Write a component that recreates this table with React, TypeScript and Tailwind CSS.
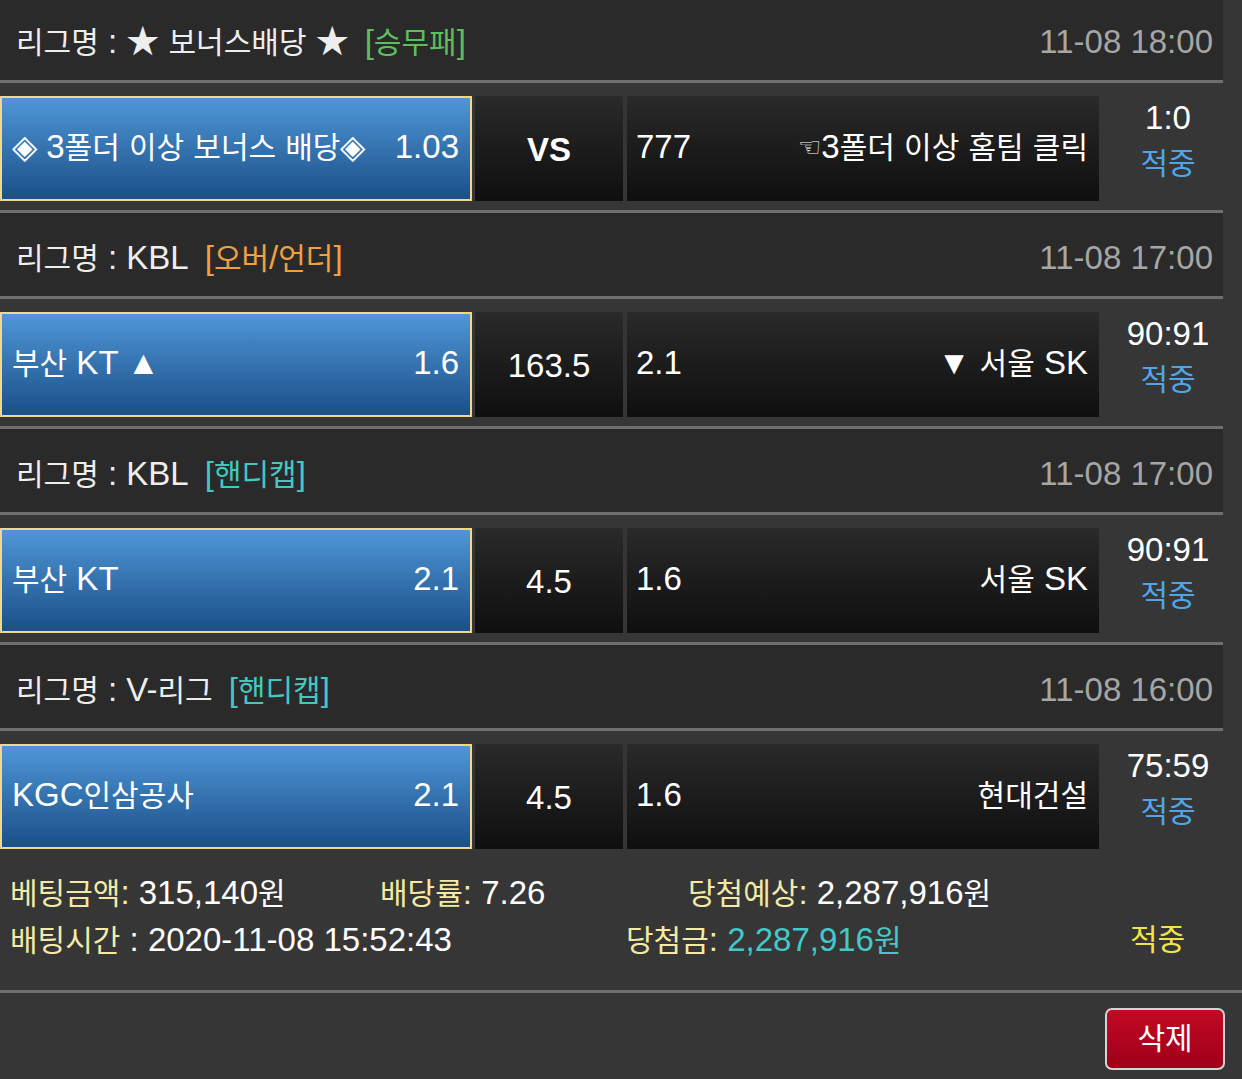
import type { ReactNode } from 'react'

const font = { fontFamily: '"Liberation Sans", "Noto Sans CJK KR", sans-serif' }

// hangul runs render a bit smaller than the latin text in the source page
function K({ t }: { t: string }) {
  const parts = t.split(/([\uAC00-\uD7A3\u3131-\u318E]+)/)
  return (
    <>
      {parts.map((p, i) =>
        i % 2 === 1 ? <span key={i} className="text-[30px]">{p}</span> : <span key={i}>{p}</span>
      )}
    </>
  )
}

type Game = {
  league: string
  tag: string
  tagColor: string
  time: string
  home: string
  homeOdd: string
  mid: string
  midBold?: boolean
  awayOdd: string
  away: ReactNode
  score: string
}

const games: Game[] = [
  {
    league: '리그명 : ★ 보너스배당 ★',
    tag: '[승무패]',
    tagColor: 'text-[#5cbf5c]',
    time: '11-08 18:00',
    home: '◈ 3폴더 이상 보너스 배당◈',
    homeOdd: '1.03',
    mid: 'VS',
    midBold: true,
    awayOdd: '777',
    away: (
      <>
        <span className="text-[26px] align-[2px]" style={{ fontFamily: '"DejaVu Sans", sans-serif' }}>☜</span>
        <K t="3폴더 이상 홈팀 클릭" />
      </>
    ),
    score: '1:0',
  },
  {
    league: '리그명 : KBL',
    tag: '[오버/언더]',
    tagColor: 'text-[#f0a040]',
    time: '11-08 17:00',
    home: '부산 KT ▲',
    homeOdd: '1.6',
    mid: '163.5',
    awayOdd: '2.1',
    away: <K t="▼ 서울 SK" />,
    score: '90:91',
  },
  {
    league: '리그명 : KBL',
    tag: '[핸디캡]',
    tagColor: 'text-[#44c8c0]',
    time: '11-08 17:00',
    home: '부산 KT',
    homeOdd: '2.1',
    mid: '4.5',
    awayOdd: '1.6',
    away: <K t="서울 SK" />,
    score: '90:91',
  },
  {
    league: '리그명 : V-리그',
    tag: '[핸디캡]',
    tagColor: 'text-[#44c8c0]',
    time: '11-08 16:00',
    home: 'KGC인삼공사',
    homeOdd: '2.1',
    mid: '4.5',
    awayOdd: '1.6',
    away: <K t="현대건설" />,
    score: '75:59',
  },
]

function GameBlock({ g, first }: { g: Game; first: boolean }) {
  return (
    <div className="w-[1223px]">
      {!first && <div className="h-[3px] bg-[#6f6f6f]" />}
      <div className={`${first ? 'h-[80px] pt-[3px]' : 'h-[83px] pt-[6px]'} bg-[#2a2a2a] flex items-center pl-[16px] pr-[10px] text-[33px] leading-none`}>
        <span className="text-[#eeeeee]"><K t={g.league} /></span>
        <span className={`ml-[16px] ${g.tagColor}`}><K t={g.tag} /></span>
        <span className="ml-auto text-[#a6a6a6]">{g.time}</span>
      </div>
      <div className="h-[3px] bg-[#6f6f6f]" />
      <div className="h-[127px] pt-[13px] pb-[9px] flex text-[33px] leading-none text-white">
        <div className="w-[472px] h-[105px] border-2 border-[#f2d88c] bg-gradient-to-b from-[#4f97d8] to-[#1b5088] flex items-center pl-[10px] pr-[11px] pb-[5px]">
          <span><K t={g.home} /></span>
          <span className="ml-auto">{g.homeOdd}</span>
        </div>
        <div className="ml-[3px] w-[148px] h-[105px] bg-gradient-to-b from-[#2a2a2a] to-[#0f0f0f] flex items-center justify-center pt-[2px]">
          <span className={g.midBold ? 'font-bold' : ''}>{g.mid}</span>
        </div>
        <div className="ml-[4px] w-[472px] h-[105px] bg-gradient-to-b from-[#2a2a2a] to-[#0f0f0f] flex items-center pl-[9px] pr-[11px] pb-[5px]">
          <span>{g.awayOdd}</span>
          <span className="ml-auto">{g.away}</span>
        </div>
        <div className="flex-1 flex flex-col items-center justify-center pl-[14px] pb-[16px] leading-[46px]">
          <span>{g.score}</span>
          <span className="text-[#4ea6e6] text-[30px]">적중</span>
        </div>
      </div>
    </div>
  )
}

export default function App() {
  return (
    <div className="min-h-screen bg-[#363636] overflow-hidden" style={font}>
      {games.map((g, i) => (
        <GameBlock key={i} g={g} first={i === 0} />
      ))}
      <div className="h-[132px] pt-[12px] text-[33px] leading-[46px] text-white">
        <div className="flex pl-[10px]">
          <span className="w-[370px]"><span className="text-[#f3eaa8]"><K t="베팅금액:" /></span> <K t="315,140원" /></span>
          <span className="w-[308px]"><span className="text-[#f3eaa8]"><K t="배당률:" /></span> 7.26</span>
          <span><span className="text-[#f3eaa8]"><K t="당첨예상:" /></span> <K t="2,287,916원" /></span>
        </div>
        <div className="flex pl-[10px]">
          <span className="w-[616px]"><span className="text-[#f3eaa8]"><K t="배팅시간" /></span> : 2020-11-08 15:52:43</span>
          <span className="w-[504px]"><span className="text-[#f3eaa8]"><K t="당첨금:" /></span> <span className="text-[#44c8c8]"><K t="2,287,916원" /></span></span>
          <span className="text-[#f2e24c] text-[30px]">적중</span>
        </div>
      </div>
      <div className="h-[3px] bg-[#6f6f6f]" />
      <div className="flex justify-end pt-[15px] pr-[17px]">
        <button className="w-[120px] h-[62px] rounded-[7px] border-2 border-[#d4d4d4] bg-gradient-to-b from-[#c20a24] to-[#a0001a] text-white text-[30px] pb-[2px]">
          삭제
        </button>
      </div>
    </div>
  )
}
